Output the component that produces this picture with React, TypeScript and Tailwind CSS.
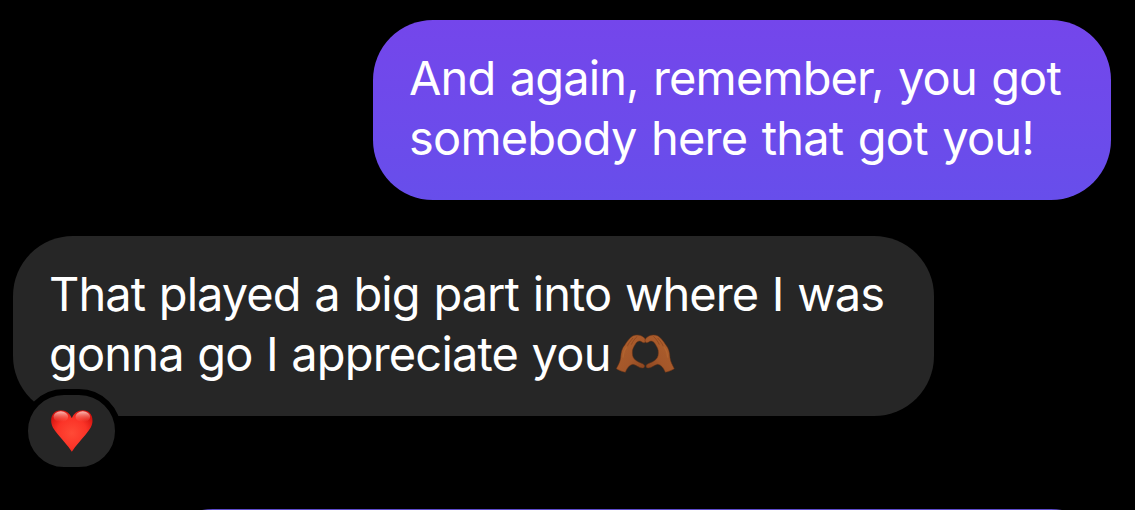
import type { ReactNode } from 'react'
import clsx from 'clsx'

interface Line {
  text: string
  spacing: string
  emoji?: ReactNode
}

function HandShape() {
  return (
    <>
      <path
        d="M49 146 C55 134 60 127 62 113 C63 96 66 84 75 74 C83 62 90 53 98 48 C108 43 121 44 130 51 C136 56 139 62 136 66 C134 69 130 69 126 66 C120 61 112 63 107 71 C101 81 96 88 97 99 C97 110 101 117 109 122 C117 128 127 129 132 134 C136 139 133 144 127 144 C117 144 109 135 99 133 C90 134 82 142 76 157 C67 155 57 151 49 146 Z"
        fill="url(#skin)"
        stroke="#6a3214"
        strokeWidth="1.5"
      />
      <path d="M99 54 C91 64 84 71 81 82 M112 49 C104 56 98 65 94 74" stroke="#84401b" strokeWidth="2" fill="none" />
      <path d="M69 113 C70 98 73 88 83 78" stroke="#c07238" strokeWidth="4" fill="none" opacity=".4" />
    </>
  )
}

function HeartHands() {
  return (
    <svg viewBox="45 39 180 126" className="ml-1 inline-block h-[42px] w-[60px] align-[-4px]">
      <defs>
        <linearGradient id="skin" x1="0" y1="0" x2="1" y2="1">
          <stop offset="0" stopColor="#b0602c" />
          <stop offset=".6" stopColor="#a4572a" />
          <stop offset="1" stopColor="#83401d" />
        </linearGradient>
      </defs>
      <HandShape />
      <g transform="translate(272 0) scale(-1 1)">
        <HandShape />
      </g>
    </svg>
  )
}

function RedHeart() {
  return (
    <svg viewBox="119 89 131 132" className="h-11 w-11">
      <defs>
        <radialGradient id="heart" cx=".5" cy=".55" r=".6">
          <stop offset="0" stopColor="#ff4a36" />
          <stop offset=".6" stopColor="#fb3327" />
          <stop offset="1" stopColor="#d5130f" />
        </radialGradient>
        <linearGradient id="shine" x1="0" y1="0" x2="0" y2="1">
          <stop offset="0" stopColor="#ffd0c9" stopOpacity=".9" />
          <stop offset="1" stopColor="#ff6a58" stopOpacity="0" />
        </linearGradient>
      </defs>
      <path
        d="M184 217 C172 198 158 184 143 166 C130 150 122 139 122 124 C122 105 134 93 151 93 C166 93 178 101 184 117 C190 101 202 93 217 93 C234 93 246 105 246 124 C246 139 238 150 225 166 C210 184 196 198 184 217 Z"
        fill="url(#heart)"
      />
      <ellipse cx="151" cy="112" rx="22" ry="16" fill="url(#shine)" />
      <ellipse cx="217" cy="112" rx="22" ry="16" fill="url(#shine)" />
    </svg>
  )
}

function Bubble({ lines, className, children }: { lines: Line[]; className: string; children?: ReactNode }) {
  return (
    <div className={clsx('relative h-[180px] shrink-0 rounded-[60px] pt-7 pl-9 text-[47px] leading-[60px] text-white', className)}>
      {lines.map((line) => (
        <p key={line.text} className="h-[60px] whitespace-nowrap">
          <span className={line.spacing}>{line.text}</span>
          {line.emoji}
        </p>
      ))}
      {children}
    </div>
  )
}

const sent: Line[] = [
  { text: 'And again, remember, you got', spacing: 'tracking-[-0.88px] [word-spacing:2px]' },
  { text: 'somebody here that got you!', spacing: 'tracking-[-0.8px] [word-spacing:2px]' },
]

const received: Line[] = [
  { text: 'That played a big part into where I was', spacing: 'tracking-[-0.96px] [word-spacing:1.5px]' },
  { text: 'gonna go I appreciate you', spacing: 'tracking-[-0.82px] [word-spacing:1px]', emoji: <HeartHands /> },
]

export default function App() {
  return (
    <div className="flex h-[510px] w-[1135px] flex-col overflow-hidden bg-black pt-5 pr-6 pl-[13px] font-['Inter',sans-serif]">
      <Bubble lines={sent} className="w-[738px] self-end bg-linear-to-b from-[#7446eb] to-[#674eeb]" />

      <Bubble lines={received} className="mt-9 w-[921px] bg-[#262626]">
        {/* reaction pill */}
        <div className="absolute top-[153px] left-[9px] flex h-[84px] w-[99px] items-center justify-center rounded-[42px] border-[6px] border-black bg-[#262626]">
          <RedHeart />
        </div>
      </Bubble>

      {/* next message, only its top edge is in view */}
      <div className="mt-[93px] h-[180px] w-[958px] shrink-0 self-end rounded-[60px] bg-[#5d4bcb]" />
    </div>
  )
}
